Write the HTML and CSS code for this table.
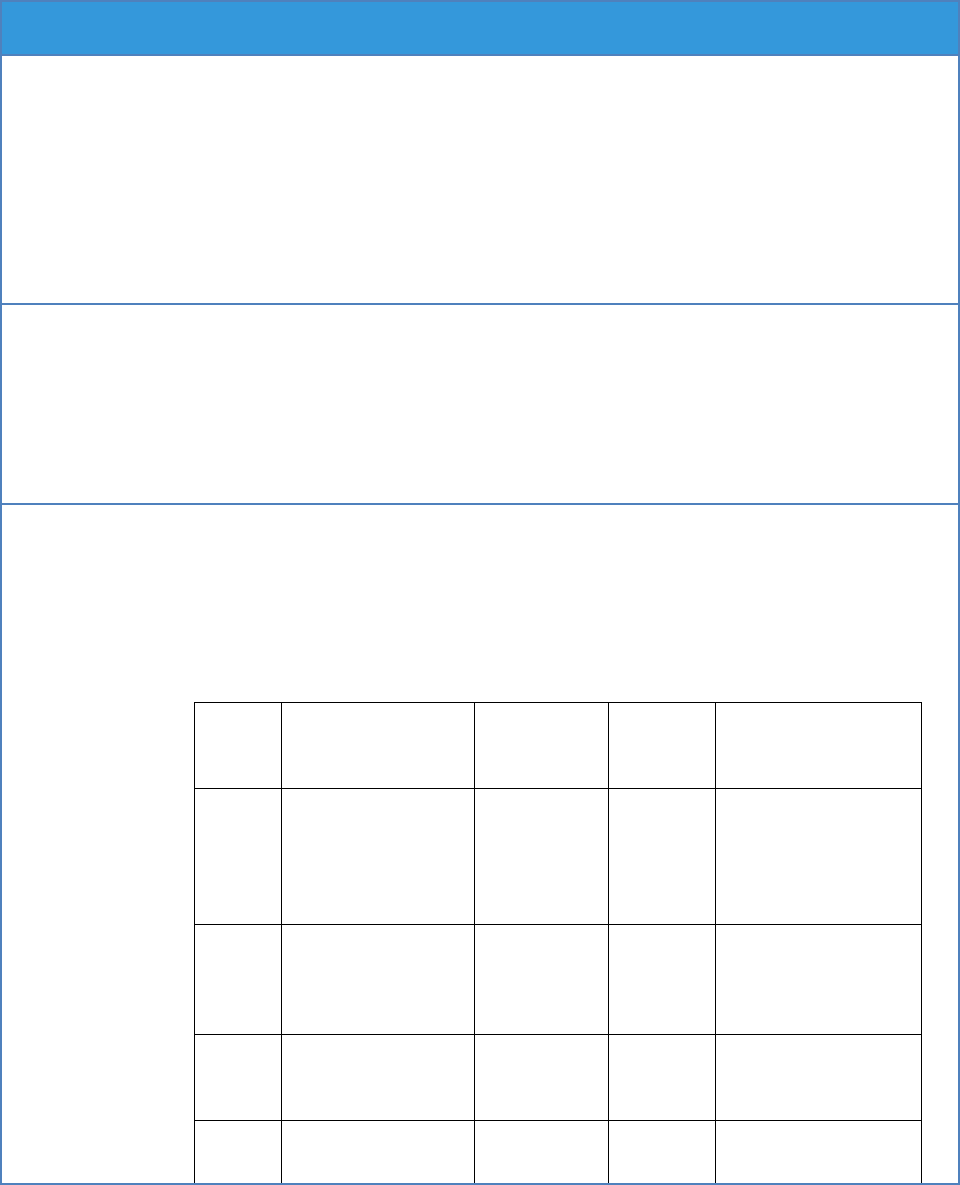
FILE: index.html
```html
<!DOCTYPE html>
<html lang="en">
<head>
    <meta charset="UTF-8">
    <title>Form</title>
    <link rel="stylesheet" href="styles.css">
</head>
<body>
    <div class="frame">
        <div class="header"></div>

        <div class="section section-top"></div>

        <div class="section section-mid"></div>

        <div class="section section-table">
            <table class="grid">
                <colgroup>
                    <col class="col-1">
                    <col class="col-2">
                    <col class="col-3">
                    <col class="col-4">
                    <col class="col-5">
                </colgroup>
                <tr class="row-head"><td></td><td></td><td></td><td></td><td></td></tr>
                <tr class="row-tall"><td></td><td></td><td></td><td></td><td></td></tr>
                <tr class="row-mid"><td></td><td></td><td></td><td></td><td></td></tr>
                <tr class="row-head"><td></td><td></td><td></td><td></td><td></td></tr>
                <tr class="row-head"><td></td><td></td><td></td><td></td><td></td></tr>
            </table>
        </div>
    </div>
</body>
</html>
```

FILE: styles.css
```css
body {
    margin: 0;
    font-family: "Liberation Sans", Arial, sans-serif;
    background: #fff;
}
.frame {
    width: 960px;
    height: 1185px;
    box-sizing: border-box;
    border: 2px solid #4f81bd;
    border-bottom: none;
    overflow: hidden;
}
.header {
    height: 52px;
    background: #3498db;
    border-bottom: 2px solid #4f81bd;
}
.section {
    border-bottom: 2px solid #4f81bd;
    overflow: hidden;
}
.section-top { height: 247px; }
.section-mid { height: 198px; }
.section-table {
    height: 678px;
    padding: 197px 0 0 192px;
    box-sizing: content-box;
    height: 481px;
}
.grid {
    border-collapse: collapse;
    table-layout: fixed;
    width: 727px;
}
.grid td {
    border: 1px solid #000;
    padding: 0;
}
.col-1 { width: 87px; }
.col-2 { width: 193px; }
.col-3 { width: 134px; }
.col-4 { width: 107px; }
.col-5 { width: 206px; }
.row-head { height: 86px; }
.row-tall { height: 136px; }
.row-mid { height: 110px; }
```
